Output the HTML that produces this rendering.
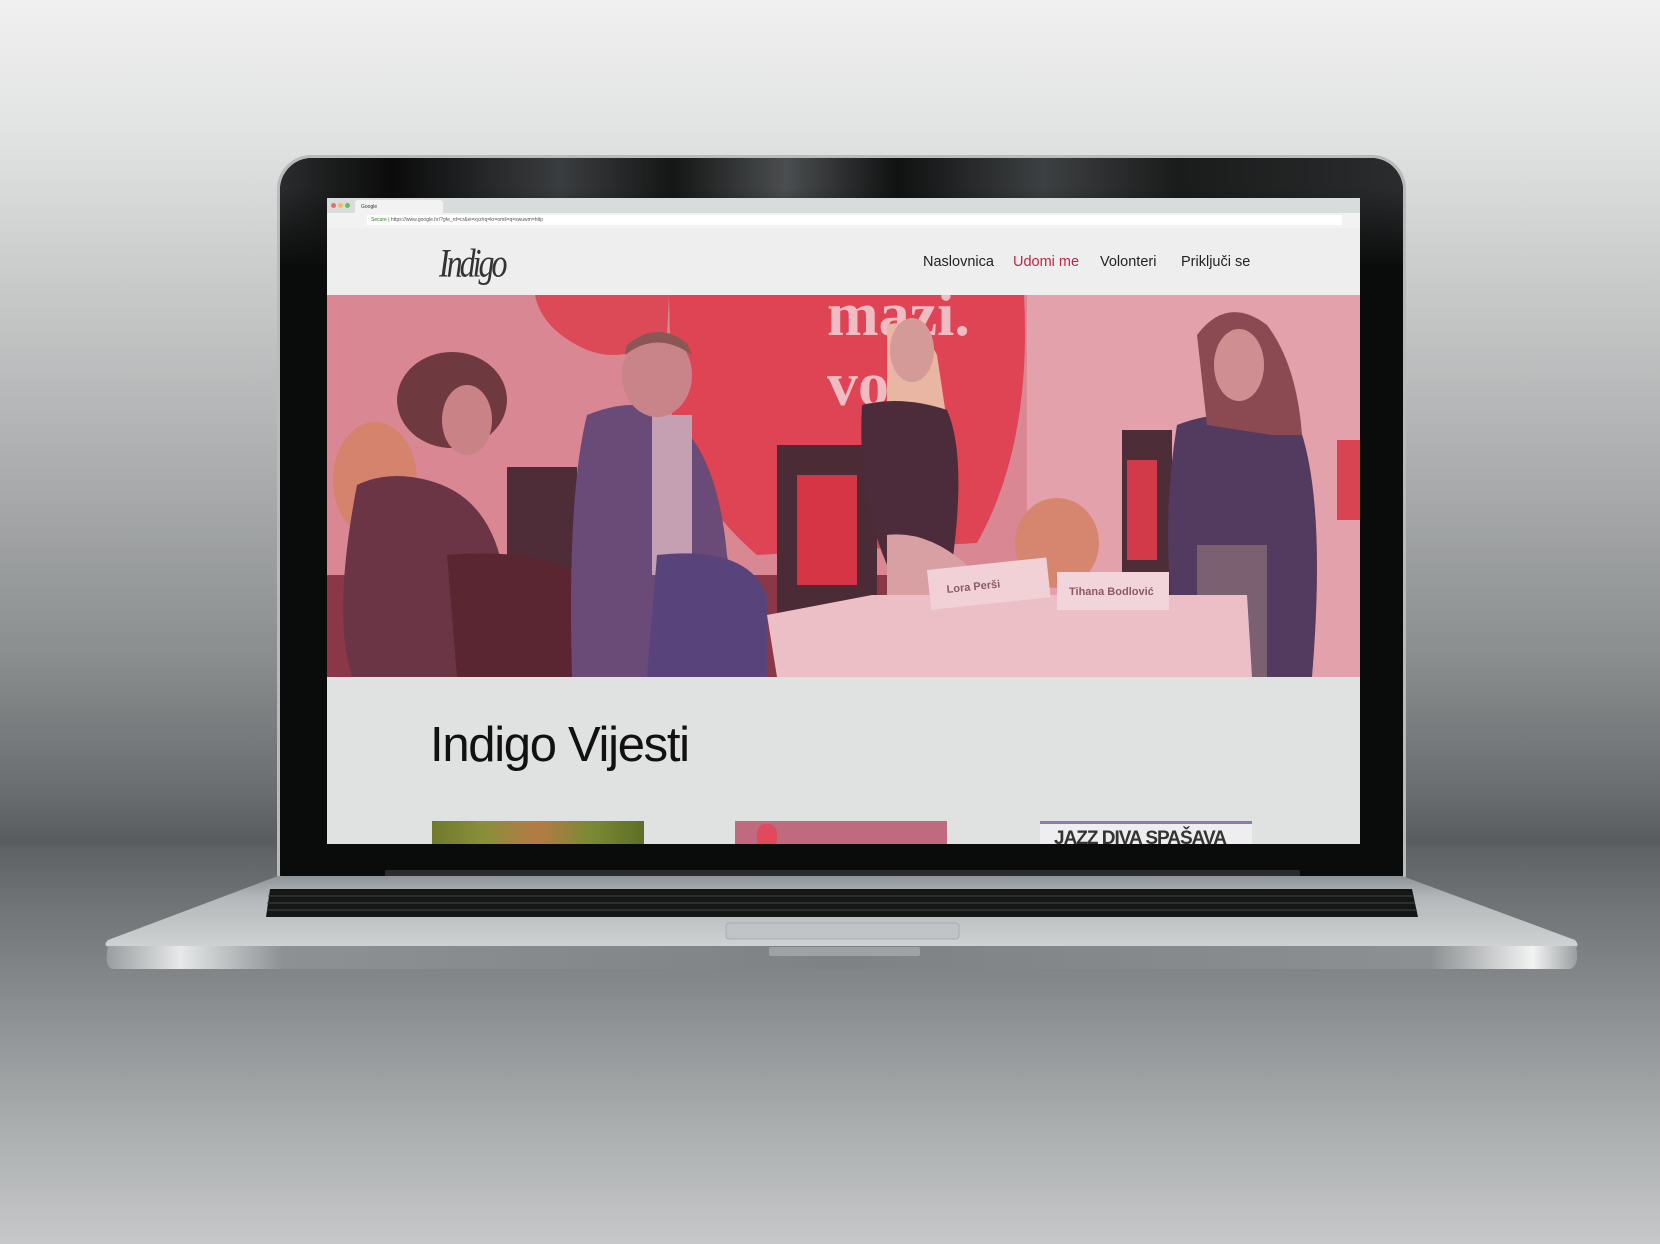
<!DOCTYPE html>
<html><head><meta charset="utf-8"><style>
*{margin:0;padding:0;box-sizing:border-box}
body{width:1660px;height:1244px;overflow:hidden;position:relative;font-family:"Liberation Sans",sans-serif;
background:linear-gradient(180deg,#f0f0f0 0px,#e2e3e3 130px,#c9cbcb 280px,#aeb0b1 450px,#8c8f90 650px,#6a6e70 790px,#585c5e 843px,#5f6365 850px,#74787a 920px,#8b8f91 1010px,#a9acad 1120px,#c6c8c9 1244px)}
.abs{position:absolute}
</style></head><body>
<!-- lid -->
<div class="abs" style="left:277px;top:155px;width:1129px;height:726px;border-radius:34px 34px 6px 6px;background:#b8babb;"></div>
<div class="abs" style="left:280px;top:158px;width:1123px;height:722px;border-radius:32px 32px 5px 5px;background:#0a0b0b;"></div>
<div class="abs" style="left:280px;top:158px;width:1123px;height:120px;border-radius:32px 32px 0 0;background:linear-gradient(180deg,rgba(10,11,11,0) 0px,rgba(10,11,11,0) 30px,#0a0b0b 110px),linear-gradient(90deg,#2a2c2d 0%,#0b0b0b 10%,#3a3d3f 25%,#151616 35%,#4b4e50 45%,#101111 55%,#3d4042 68%,#1a1b1b 80%,#2a2c2d 100%);"></div>
<!-- screen -->
<div class="abs" style="left:327px;top:198px;width:1033px;height:646px;background:#e0e1e1;overflow:hidden">
  <div class="abs" style="left:0;top:0;width:1033px;height:15px;background:#d9dcdd"></div>
  <div class="abs" style="left:4px;top:5px;width:5px;height:5px;border-radius:50%;background:#f06a60"></div>
  <div class="abs" style="left:11px;top:5px;width:5px;height:5px;border-radius:50%;background:#f5be4f"></div>
  <div class="abs" style="left:18px;top:5px;width:5px;height:5px;border-radius:50%;background:#5ec454"></div>
  <div class="abs" style="left:28px;top:2px;width:88px;height:13px;background:#f2f2f2;border-radius:3px 3px 0 0;font-size:5px;color:#333;padding:4px 6px">Google</div>
  <div class="abs" style="left:0;top:15px;width:1033px;height:15px;background:#f2f2f2"></div>
  <div class="abs" style="left:40px;top:17px;width:975px;height:10px;background:#fff;font-size:5px;color:#2a7a2a;padding:2px 4px;white-space:nowrap">Secure | <span style="color:#555">https://www.google.hr/?gfe_rd=cr&amp;ei=xyz#q=kr=omil=q=swuwm=http</span></div>
  <div class="abs" style="left:0;top:30px;width:1033px;height:67px;background:#efeeef"></div>
  <div class="abs" style="left:112px;top:42px;font-family:'Liberation Serif',serif;font-style:italic;font-size:32px;color:#333;letter-spacing:-3px;transform:scaleY(1.25);transform-origin:left top">Indigo</div>
  <div class="abs" style="left:596px;top:56px;font-size:14.5px;color:#222;white-space:nowrap">Naslovnica</div>
  <div class="abs" style="left:686px;top:56px;font-size:14.5px;color:#c0273e;white-space:nowrap">Udomi me</div>
  <div class="abs" style="left:773px;top:56px;font-size:14.5px;color:#222;white-space:nowrap">Volonteri</div>
  <div class="abs" style="left:854px;top:56px;font-size:14.5px;color:#222;white-space:nowrap">Priključi se</div>
  <svg class="abs" style="left:0;top:97px" width="1033" height="382" viewBox="0 0 1033 382">
    <rect width="1033" height="382" fill="#d98793"/>
    <rect x="700" width="333" height="382" fill="#e2a1ab"/>
    <path d="M208 0 H342 L340 40 Q300 70 260 55 Q215 35 208 0Z" fill="#dc4a57"/>
    <path d="M342 0 H697 Q705 150 650 248 L430 260 Q360 200 345 120Z" fill="#df4454"/>
    <text x="500" y="40" font-family="Liberation Serif,serif" font-weight="bold" font-size="62" fill="#efbcc3">mazi.</text>
    <text x="500" y="110" font-family="Liberation Serif,serif" font-weight="bold" font-size="62" fill="#efbcc3">vo</text>
    <ellipse cx="48" cy="185" rx="42" ry="58" fill="#d5836c"/>
    <ellipse cx="730" cy="248" rx="42" ry="45" fill="#d6866f"/>
    <rect x="1010" y="145" width="23" height="80" fill="#d94452"/>
    <rect x="0" y="280" width="700" height="102" fill="#8a3848"/>
    <rect x="180" y="172" width="70" height="200" fill="#4e2d38"/>
    <rect x="450" y="150" width="100" height="220" fill="#4a2b36"/>
    <rect x="470" y="180" width="60" height="110" fill="#d63545"/>
    <rect x="795" y="135" width="50" height="220" fill="#4d2e38"/>
    <rect x="800" y="165" width="30" height="100" fill="#d23a4a"/>
    <path d="M30 190 Q60 175 100 185 Q160 200 175 270 L200 382 H25 Q5 320 30 190Z" fill="#6b3546"/>
    <ellipse cx="125" cy="105" rx="55" ry="48" fill="#6e3a40"/>
    <ellipse cx="140" cy="125" rx="25" ry="35" fill="#c98386"/>
    <path d="M120 260 Q230 250 290 300 L295 382 H130Z" fill="#5a2632"/>
    <path d="M260 120 Q310 100 340 120 Q390 150 400 260 L420 382 H245 Q240 200 260 120Z" fill="#6a4b78"/>
    <rect x="325" y="120" width="40" height="160" fill="#c59fb2"/>
    <ellipse cx="330" cy="80" rx="35" ry="42" fill="#c88488"/>
    <path d="M298 60 Q330 35 365 60 L360 48 Q330 25 300 50Z" fill="#8a5656"/>
    <path d="M330 260 Q420 250 440 300 L440 382 H320Z" fill="#58437a"/>
    <path d="M560 30 Q590 20 610 60 L625 160 L560 170Z" fill="#e8b6a2"/>
    <path d="M535 110 Q575 100 620 115 Q640 160 625 270 L560 270 Q530 200 535 110Z" fill="#4c2c3b"/>
    <ellipse cx="585" cy="55" rx="22" ry="32" fill="#d49a98"/>
    <path d="M560 240 Q600 235 640 270 L620 300 L560 300Z" fill="#d9a0a4"/>
    <path d="M850 130 Q900 110 970 125 Q1000 200 985 382 H855 Q830 250 850 130Z" fill="#533a5f"/>
    <path d="M870 40 Q900 0 940 30 Q970 70 975 140 L945 140 L880 130Z" fill="#8b4a52"/>
    <ellipse cx="912" cy="70" rx="25" ry="36" fill="#cf8f92"/>
    <rect x="870" y="250" width="70" height="132" fill="#7a6070"/>
    <path d="M440 320 L545 300 H920 L925 382 H450Z" fill="#ecbfc7"/>
    <rect x="600" y="275" width="120" height="40" fill="#f1d1d6" transform="rotate(-6 600 275)"/>
    <rect x="730" y="277" width="112" height="38" fill="#f1d5da"/>
    <text x="742" y="300" font-size="11" font-weight="bold" fill="#8a5a6a">Tihana Bodlović</text>
    <text x="620" y="298" font-size="11" font-weight="bold" fill="#8a5a6a" transform="rotate(-6 620 298)">Lora Perši</text>
  </svg>
  <div class="abs" style="left:103px;top:519px;font-size:49px;color:#111;letter-spacing:-1.3px;white-space:nowrap">Indigo Vijesti</div>
  <div class="abs" style="left:105px;top:623px;width:212px;height:30px;background:linear-gradient(90deg,#6f7a2c,#8a8f3a,#b57a44,#7a8a33,#5e6e26)"></div>
  <div class="abs" style="left:408px;top:623px;width:212px;height:30px;background:#c06a80"></div>
  <div class="abs" style="left:430px;top:626px;width:20px;height:25px;border-radius:40%;background:#e04a5a"></div>
  <div class="abs" style="left:713px;top:623px;width:212px;height:30px;background:#eeeef0;border-top:3px solid #8f7ab0;overflow:hidden;font-weight:bold;font-size:19px;color:#333;padding:4px 0 0 14px;letter-spacing:-1px;white-space:nowrap">JAZZ DIVA SPAŠAVA</div>
</div>
<!-- base -->
<div class="abs" style="left:385px;top:870px;width:915px;height:10px;background:#2a2c2d;border-radius:2px"></div>
<svg class="abs" style="left:0;top:870px" width="1660" height="110" viewBox="0 870 1660 110">
  <defs>
    <linearGradient id="deck" x1="0" y1="0" x2="0" y2="1"><stop offset="0" stop-color="#8f9496"/><stop offset="0.3" stop-color="#b3b7b9"/><stop offset="1" stop-color="#cfd2d3"/></linearGradient>
    <linearGradient id="front" x1="0" y1="0" x2="1" y2="0"><stop offset="0" stop-color="#9a9d9f"/><stop offset="0.05" stop-color="#e6e8e9"/><stop offset="0.12" stop-color="#8d9193"/><stop offset="0.5" stop-color="#7e8284"/><stop offset="0.9" stop-color="#8c9092"/><stop offset="0.97" stop-color="#f2f3f3"/><stop offset="1" stop-color="#9a9d9f"/></linearGradient>
  </defs>
  <path d="M278 876 H1402 L1575 940 Q1580 946 1575 947 H110 Q102 946 108 940Z" fill="url(#deck)"/>
  <path d="M108 946 H1576 Q1580 966 1570 969 H112 Q104 966 108 946Z" fill="url(#front)"/>
  <path d="M270 889 H1412 L1418 917 H266Z" fill="#151616"/>
  <g stroke="#444" stroke-width="1">
    <line x1="268" y1="896" x2="1414" y2="896"/><line x1="267" y1="903" x2="1415" y2="903"/><line x1="267" y1="910" x2="1416" y2="910"/>
  </g>
  <rect x="726" y="923" width="233" height="16" rx="3" fill="#c0c4c6" stroke="#a9adaf"/>
  <rect x="769" y="947" width="151" height="9" rx="2" fill="#9ea2a4"/>
</svg>
</body></html>
